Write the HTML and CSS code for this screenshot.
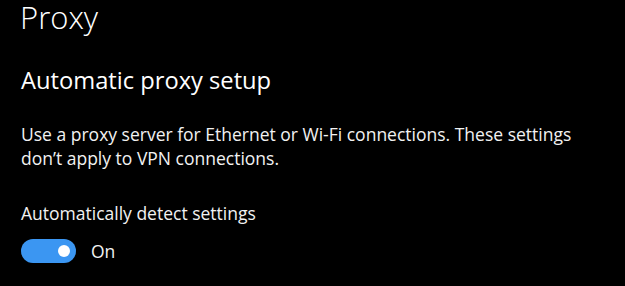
FILE: index.html
```html
<!DOCTYPE html>
<html>
<head>
<meta charset="utf-8">
<link rel="stylesheet" href="styles.css">
</head>
<body>
<main class="page">
  <h1 class="title">Proxy</h1>
  <h2 class="subtitle">Automatic proxy setup</h2>
  <p class="desc">Use a proxy server for Ethernet or Wi-Fi connections. These settings don’t apply to VPN connections.</p>
  <div class="setting">
    <div class="label">Automatically detect settings</div>
    <div class="toggle-row">
      <span class="toggle"><span class="knob"></span></span>
      <span class="state">On</span>
    </div>
  </div>
</main>
</body>
</html>
```
FILE: styles.css
```css
html, body {
  margin: 0;
  padding: 0;
  background: #000;
}
body {
  width: 625px;
  height: 286px;
  overflow: hidden;
  font-family: "Open Sans", "Noto Sans", sans-serif;
  color: #fff;
}
.page {
  padding: 0 0 0 20px;
}
.title {
  margin: 0;
  font-size: 31px;
  font-weight: 300;
  line-height: 34px;
}
.subtitle {
  margin: 31px 0 0 1px;
  font-size: 23.7px;
  font-weight: 400;
  line-height: 30px;
}
.desc {
  margin: 27px 0 0 1px;
  width: 585px;
  font-size: 17.5px;
  line-height: 24px;
  color: #f2f2f2;
}
.setting {
  margin-top: 31px;
}
.label {
  margin-left: 1px;
  font-size: 17.5px;
  line-height: 24px;
  color: #f2f2f2;
}
.toggle-row {
  display: flex;
  align-items: center;
  margin-top: 14px;
  margin-left: 1px;
  gap: 15px;
}
.toggle {
  display: flex;
  align-items: center;
  justify-content: flex-end;
  width: 55px;
  height: 24px;
  border-radius: 12px;
  background: #3b96f2;
  padding-right: 6px;
  box-sizing: border-box;
}
.knob {
  width: 12px;
  height: 12px;
  border-radius: 50%;
  background: #fff;
}
.state {
  font-size: 17.5px;
  line-height: 24px;
  color: #f2f2f2;
}
```
